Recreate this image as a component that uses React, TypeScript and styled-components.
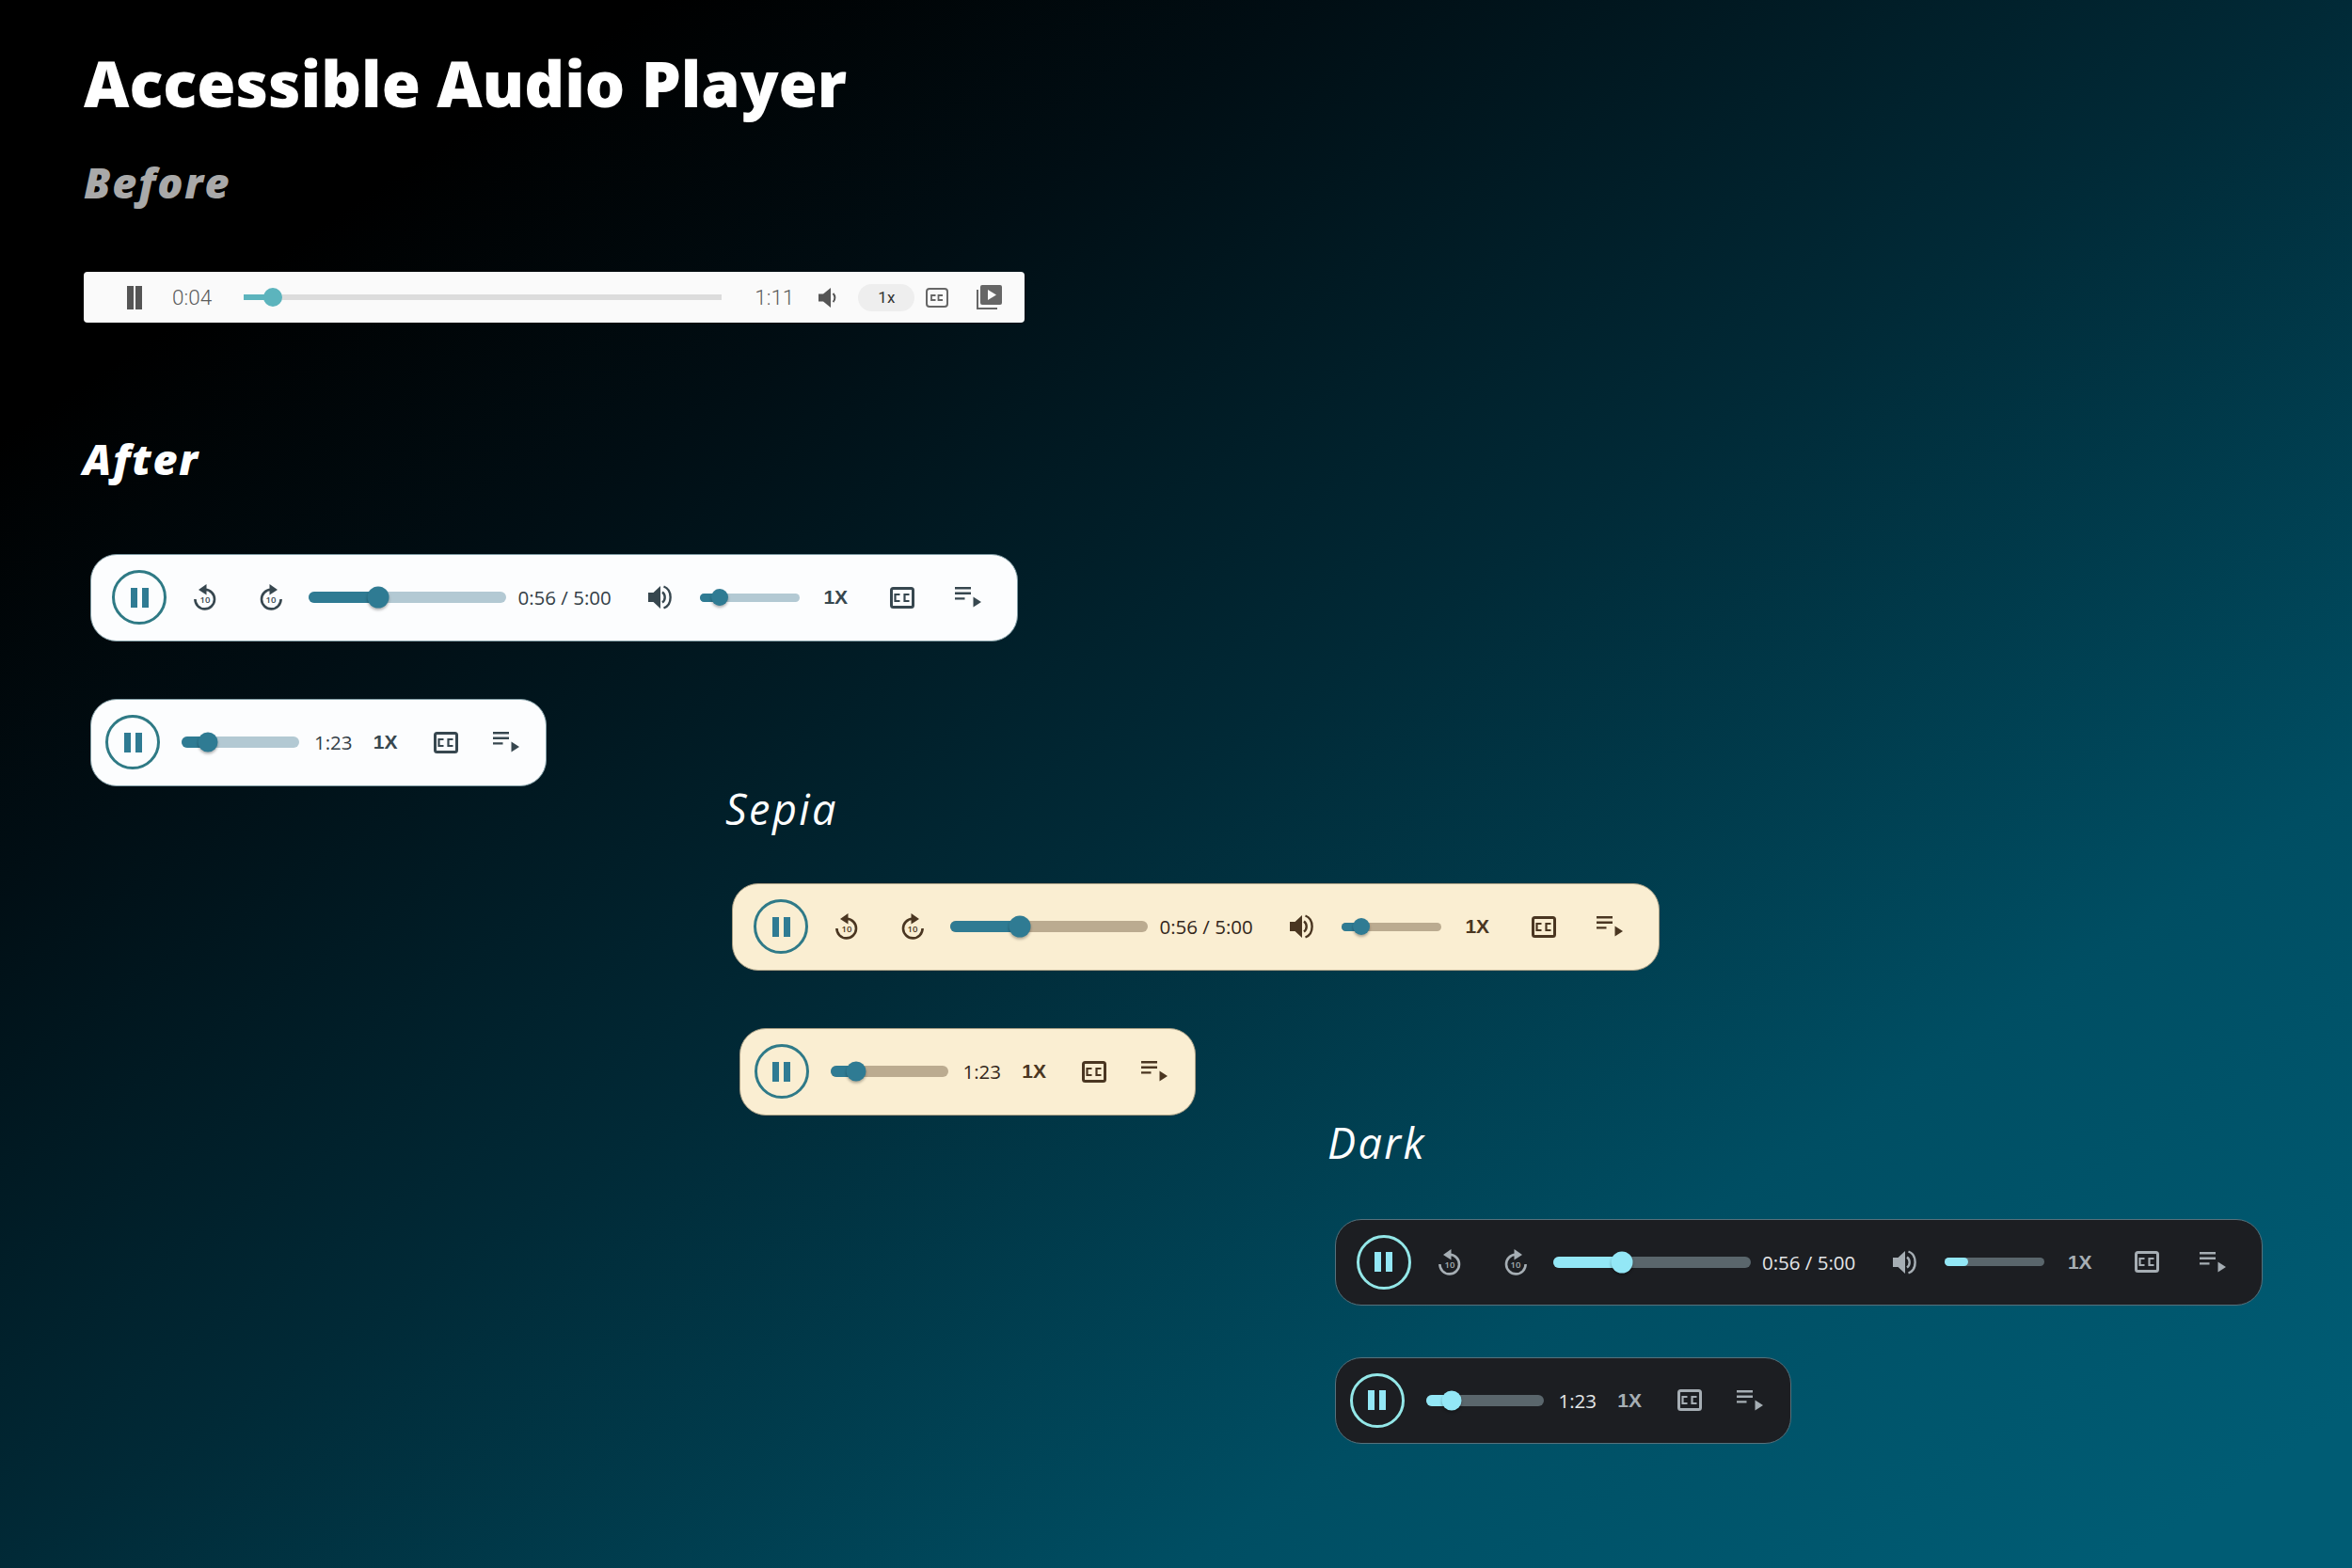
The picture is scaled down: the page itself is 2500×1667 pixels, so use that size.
import styled, { createGlobalStyle, ThemeProvider } from 'styled-components';

const GlobalStyle = createGlobalStyle`
  html, body {
    margin: 0;
    padding: 0;
    background: #000;
    font-family: "Open Sans", "Liberation Sans", sans-serif;
  }
`;

/* ── Player themes ────────────────────────────────────────────────── */
const TONES = {
  light: {
    bg: '#fcfdfe',
    border: '#7f9ba3',
    accent: '#2f7b93',
    ring: '#2f7a85',
    rail: '#b3c9d3',
    icon: '#37474f',
    text: '#333e46',
  },
  sepia: {
    bg: '#faeed2',
    border: '#a89f85',
    accent: '#2f7b93',
    ring: '#2f7a88',
    rail: '#bbab90',
    icon: '#4a3621',
    text: '#33261a',
  },
  dark: {
    bg: '#1c1e22',
    border: '#56717c',
    accent: '#93e7f6',
    ring: '#93e7e8',
    rail: '#5a666c',
    icon: '#a6aeb4',
    text: '#e4e6e8',
  },
};

const Page = styled.main`
  width: 2500px;
  height: 1667px;
  box-sizing: border-box;
  overflow: hidden;
  padding-top: 48.5px;
  background: linear-gradient(to bottom right, #000 14%, #010e14 28%, #012a37 50%, #004e63 75%, #005c74 95%);
`;

const Title = styled.h1`
  margin: 0 0 0 89px;
  font-size: 66.7px;
  line-height: 80px;
  font-weight: 800;
  color: #fff;
`;

const Section = styled.section<{ $left: number; $top: number }>`
  margin: ${({ $top }) => $top}px 0 0 ${({ $left }) => $left}px;
`;

const Label = styled.h2<{ $muted?: boolean; $soft?: boolean }>`
  margin: 0;
  font-size: 45px;
  line-height: 40px;
  font-style: italic;
  font-weight: ${({ $soft }) => ($soft ? 500 : 800)};
  letter-spacing: ${({ $soft }) => ($soft ? '2.4px' : '1.7px')};
  color: ${({ $muted }) => ($muted ? '#a9a9a9' : '#fff')};
`;

/* ── "Before" player ──────────────────────────────────────────────── */
const OldBar = styled.div`
  display: flex;
  align-items: center;
  width: 1000px;
  height: 54px;
  box-sizing: border-box;
  margin-top: 75px;
  padding-left: 46px;
  background: #fafafa;
  border-radius: 4px;
  color: #777;
`;

const OldTime = styled.span<{ $gap: number }>`
  margin-left: ${({ $gap }) => $gap}px;
  font-family: Roboto, "Liberation Sans", sans-serif;
  font-size: 22.5px;
  font-weight: 300;
  color: #5c5c5c;
`;

const OldRail = styled.div`
  position: relative;
  width: 508px;
  height: 6px;
  margin-left: 34px;
  background: #dcdcdc;
`;

const OldFill = styled.div`
  height: 100%;
  background: #5cb4bd;
`;

const OldThumb = styled.div`
  position: absolute;
  top: -7px;
  width: 20px;
  height: 20px;
  border-radius: 50%;
  background: #5cb4bd;
`;

const SpeedPill = styled.span`
  display: flex;
  align-items: center;
  justify-content: center;
  width: 60px;
  height: 29px;
  margin-left: 21px;
  border-radius: 15px;
  background: #eeeeee;
  font-family: Roboto, "Liberation Sans", sans-serif;
  font-size: 17px;
  color: #333;
`;

const OldIcon = styled.span<{ $gap: number }>`
  display: flex;
  margin-left: ${({ $gap }) => $gap}px;
`;

/* ── "After" player ───────────────────────────────────────────────── */
const Bar = styled.div<{ $indent: number; $compact?: boolean; $top: number }>`
  display: flex;
  align-items: center;
  width: ${({ $compact }) => ($compact ? 485 : 986)}px;
  height: 92.5px;
  box-sizing: border-box;
  margin: ${({ $top }) => $top}px 0 0 ${({ $indent }) => $indent}px;
  padding-left: ${({ $compact }) => ($compact ? 15 : 22)}px;
  background: ${({ theme }) => theme.bg};
  border: 1px solid ${({ theme }) => theme.border};
  border-radius: 28px;
`;

const PauseButton = styled.button`
  display: flex;
  align-items: center;
  justify-content: center;
  flex: none;
  gap: 5px;
  width: 58px;
  height: 58px;
  padding: 0;
  border: 3px solid ${({ theme }) => theme.ring};
  border-radius: 50%;
  background: none;
`;

const PauseStroke = styled.span`
  width: 7px;
  height: 21px;
  background: ${({ theme }) => theme.accent};
`;

const Control = styled.button<{ $width: number; $gap?: number }>`
  display: flex;
  align-items: center;
  justify-content: center;
  flex: none;
  width: ${({ $width }) => $width}px;
  margin-left: ${({ $gap }) => $gap || 0}px;
  padding: 0;
  border: none;
  background: none;
  color: ${({ theme }) => theme.icon};
`;

const Speed = styled.span`
  font-size: 21px;
  font-weight: 600;
  color: ${({ theme }) => theme.icon};
`;

const Time = styled.span<{ $gap: number }>`
  flex: none;
  margin-left: ${({ $gap }) => $gap}px;
  font-size: 20.5px;
  color: ${({ theme }) => theme.text};
`;

const Rail = styled.div<{ $width: number; $height: number; $gap: number }>`
  position: relative;
  flex: none;
  width: ${({ $width }) => $width}px;
  height: ${({ $height }) => $height}px;
  margin-left: ${({ $gap }) => $gap}px;
  border-radius: 6px;
  background: ${({ theme }) => theme.rail};
`;

const Fill = styled.div`
  height: 100%;
  border-radius: 6px;
  background: ${({ theme }) => theme.accent};
`;

const Thumb = styled.div<{ $size: number }>`
  position: absolute;
  top: 50%;
  width: ${({ $size }) => $size}px;
  height: ${({ $size }) => $size}px;
  border-radius: 50%;
  background: ${({ theme }) => theme.accent};
  box-shadow: 0 2px 3px rgba(0, 0, 0, 0.3);
  transform: translate(-50%, -50%);
`;

/* ── Icons ────────────────────────────────────────────────────────── */
const SkipIcon = ({ forward }: { forward?: boolean }) => (
  <svg width="24" height="28" viewBox="0 0 24 28">
    <g transform={forward ? 'matrix(-1 0 0 1 24 0)' : undefined}>
      <path d="M12 5.8A10.3 10.3 0 1 1 1.4 16" fill="none" stroke="currentColor" strokeWidth="2.6" />
      <path d="M13.5 0 5 5.9l8.5 5.7z" fill="currentColor" />
    </g>
    <text
      x="12"
      y="20"
      textAnchor="middle"
      fontFamily="'Open Sans', sans-serif"
      fontSize="9.5"
      fontWeight="600"
      fill="currentColor"
    >
      10
    </text>
  </svg>
);

const VolumeIcon = () => (
  <svg width="26" height="26" viewBox="0 0 26 26">
    <path d="M0 8h5.500L13 1v24l-7.500-7H0z" fill="currentColor" />
    <path d="M15 7.500c3.600 2.600 3.600 8.400 0 11" fill="none" stroke="currentColor" strokeWidth="2.4" />
    <path d="M16.500 1.500c9.500 3.600 9.500 19.400 0 23" fill="none" stroke="currentColor" strokeWidth="2.4" />
  </svg>
);

const CaptionIcon = () => (
  <svg width="26" height="23" viewBox="0 0 26 23">
    <rect x="1.500" y="1.500" width="23" height="20" rx="2" fill="none" stroke="currentColor" strokeWidth="3" />
    <path d="M10.500 8H5.500v7h5M20.500 8h-5v7h5" fill="none" stroke="currentColor" strokeWidth="2.2" />
  </svg>
);

const QueueIcon = () => (
  <svg width="28" height="22" viewBox="0 0 28 22">
    <path d="M0 0h17v2.400H0zM0 5.600h17V8H0zM0 11.200h10.500v2.400H0z" fill="currentColor" />
    <path d="M19.500 10.500 28 16l-8.500 5.500z" fill="currentColor" />
  </svg>
);

const OldPauseIcon = () => (
  <svg width="16" height="25" viewBox="0 0 16 25">
    <path d="M0 0h7v25H0zM9 0h7v25H9z" fill="#555" />
  </svg>
);

const OldVolumeIcon = () => (
  <svg width="21" height="21" viewBox="0 0 21 21">
    <path d="M0 6.500h5L13 0v21l-8-6.500H0z" fill="#555" />
    <path d="M15.500 6c2.500 2.500 2.500 6.500 0 9" fill="none" stroke="#555" strokeWidth="2" />
  </svg>
);

const OldCaptionIcon = () => (
  <svg width="24" height="21" viewBox="0 0 24 21">
    <rect x="1" y="1" width="22" height="19" rx="3" fill="none" stroke="#666" strokeWidth="2" />
    <path d="M10.500 8H6v5h4.500M18 8h-4.500v5H18" fill="none" stroke="#666" strokeWidth="1.800" />
  </svg>
);

const OldPlaylistIcon = () => (
  <svg width="27" height="26" viewBox="0 0 27 26">
    <path d="M6 0h19a2 2 0 0 1 2 2v17a2 2 0 0 1-2 2H6a2 2 0 0 1-2-2V2a2 2 0 0 1 2-2z" fill="#666" />
    <path d="M12 5l9 5.500-9 5.500z" fill="#fafafa" />
    <path d="M1 5v20h21" fill="none" stroke="#666" strokeWidth="2" />
  </svg>
);

/* ── Players ──────────────────────────────────────────────────────── */
const Slider = ({
  width,
  height,
  gap,
  percent,
  thumb,
}: {
  width: number;
  height: number;
  gap: number;
  percent: number;
  thumb?: number;
}) => (
  <Rail $width={width} $height={height} $gap={gap}>
    <Fill style={{ width: `${percent}%` }} />
    {thumb && <Thumb $size={thumb} style={{ left: `${percent}%` }} />}
  </Rail>
);

const FullPlayer = ({ indent, top, noVolumeThumb }: { indent: number; top: number; noVolumeThumb?: boolean }) => (
  <Bar $indent={indent} $top={top}>
    <PauseButton>
      <PauseStroke />
      <PauseStroke />
    </PauseButton>
    <Control $width={70} $gap={6}>
      <SkipIcon />
    </Control>
    <Control $width={70}>
      <SkipIcon forward />
    </Control>
    <Slider width={210} height={12} gap={5} percent={35} thumb={23} />
    <Time $gap={12.500}>0:56 / 5:00</Time>
    <Control $width={70} $gap={17.500}>
      <VolumeIcon />
    </Control>
    <Slider
      width={106}
      height={9}
      gap={7}
      percent={noVolumeThumb ? 24 : 20}
      thumb={noVolumeThumb ? undefined : 18}
    />
    <Control $width={70} $gap={3}>
      <Speed>1X</Speed>
    </Control>
    <Control $width={70} $gap={1}>
      <CaptionIcon />
    </Control>
    <Control $width={70}>
      <QueueIcon />
    </Control>
  </Bar>
);

const CompactPlayer = ({ indent, top }: { indent: number; top: number }) => (
  <Bar $indent={indent} $top={top} $compact>
    <PauseButton>
      <PauseStroke />
      <PauseStroke />
    </PauseButton>
    <Slider width={125} height={12} gap={23} percent={22} thumb={21} />
    <Time $gap={16}>1:23</Time>
    <Control $width={63} $gap={3.500}>
      <Speed>1X</Speed>
    </Control>
    <Control $width={63} $gap={1}>
      <CaptionIcon />
    </Control>
    <Control $width={63} $gap={1}>
      <QueueIcon />
    </Control>
  </Bar>
);

const App = () => (
  <Page>
    <GlobalStyle />
    <Title>Accessible Audio Player</Title>

    <Section $left={89} $top={45.500}>
      <Label $muted>Before</Label>
      <OldBar>
        <OldPauseIcon />
        <OldTime $gap={32}>0:04</OldTime>
        <OldRail>
          <OldFill style={{ width: '6%' }} />
          <OldThumb style={{ left: '4.100%' }} />
        </OldRail>
        <OldTime $gap={35}>1:11</OldTime>
        <OldIcon $gap={26}>
          <OldVolumeIcon />
        </OldIcon>
        <SpeedPill>1x</SpeedPill>
        <OldIcon $gap={12}>
          <OldCaptionIcon />
        </OldIcon>
        <OldIcon $gap={30}>
          <OldPlaylistIcon />
        </OldIcon>
      </OldBar>
    </Section>

    <Section $left={88} $top={125}>
      <Label>After</Label>
      <ThemeProvider theme={TONES.light}>
        <FullPlayer indent={8} top={81} />
        <CompactPlayer indent={8} top={61.500} />
      </ThemeProvider>
    </Section>

    <Section $left={771} $top={4.500}>
      <Label $soft>Sepia</Label>
      <ThemeProvider theme={TONES.sepia}>
        <FullPlayer indent={7} top={59} />
        <CompactPlayer indent={14.500} top={61.500} />
      </ThemeProvider>
    </Section>

    <Section $left={1411} $top={9}>
      <Label $soft>Dark</Label>
      <ThemeProvider theme={TONES.dark}>
        <FullPlayer indent={7.500} top={61} noVolumeThumb />
        <CompactPlayer indent={7.500} top={54.500} />
      </ThemeProvider>
    </Section>
  </Page>
);

export default App;
